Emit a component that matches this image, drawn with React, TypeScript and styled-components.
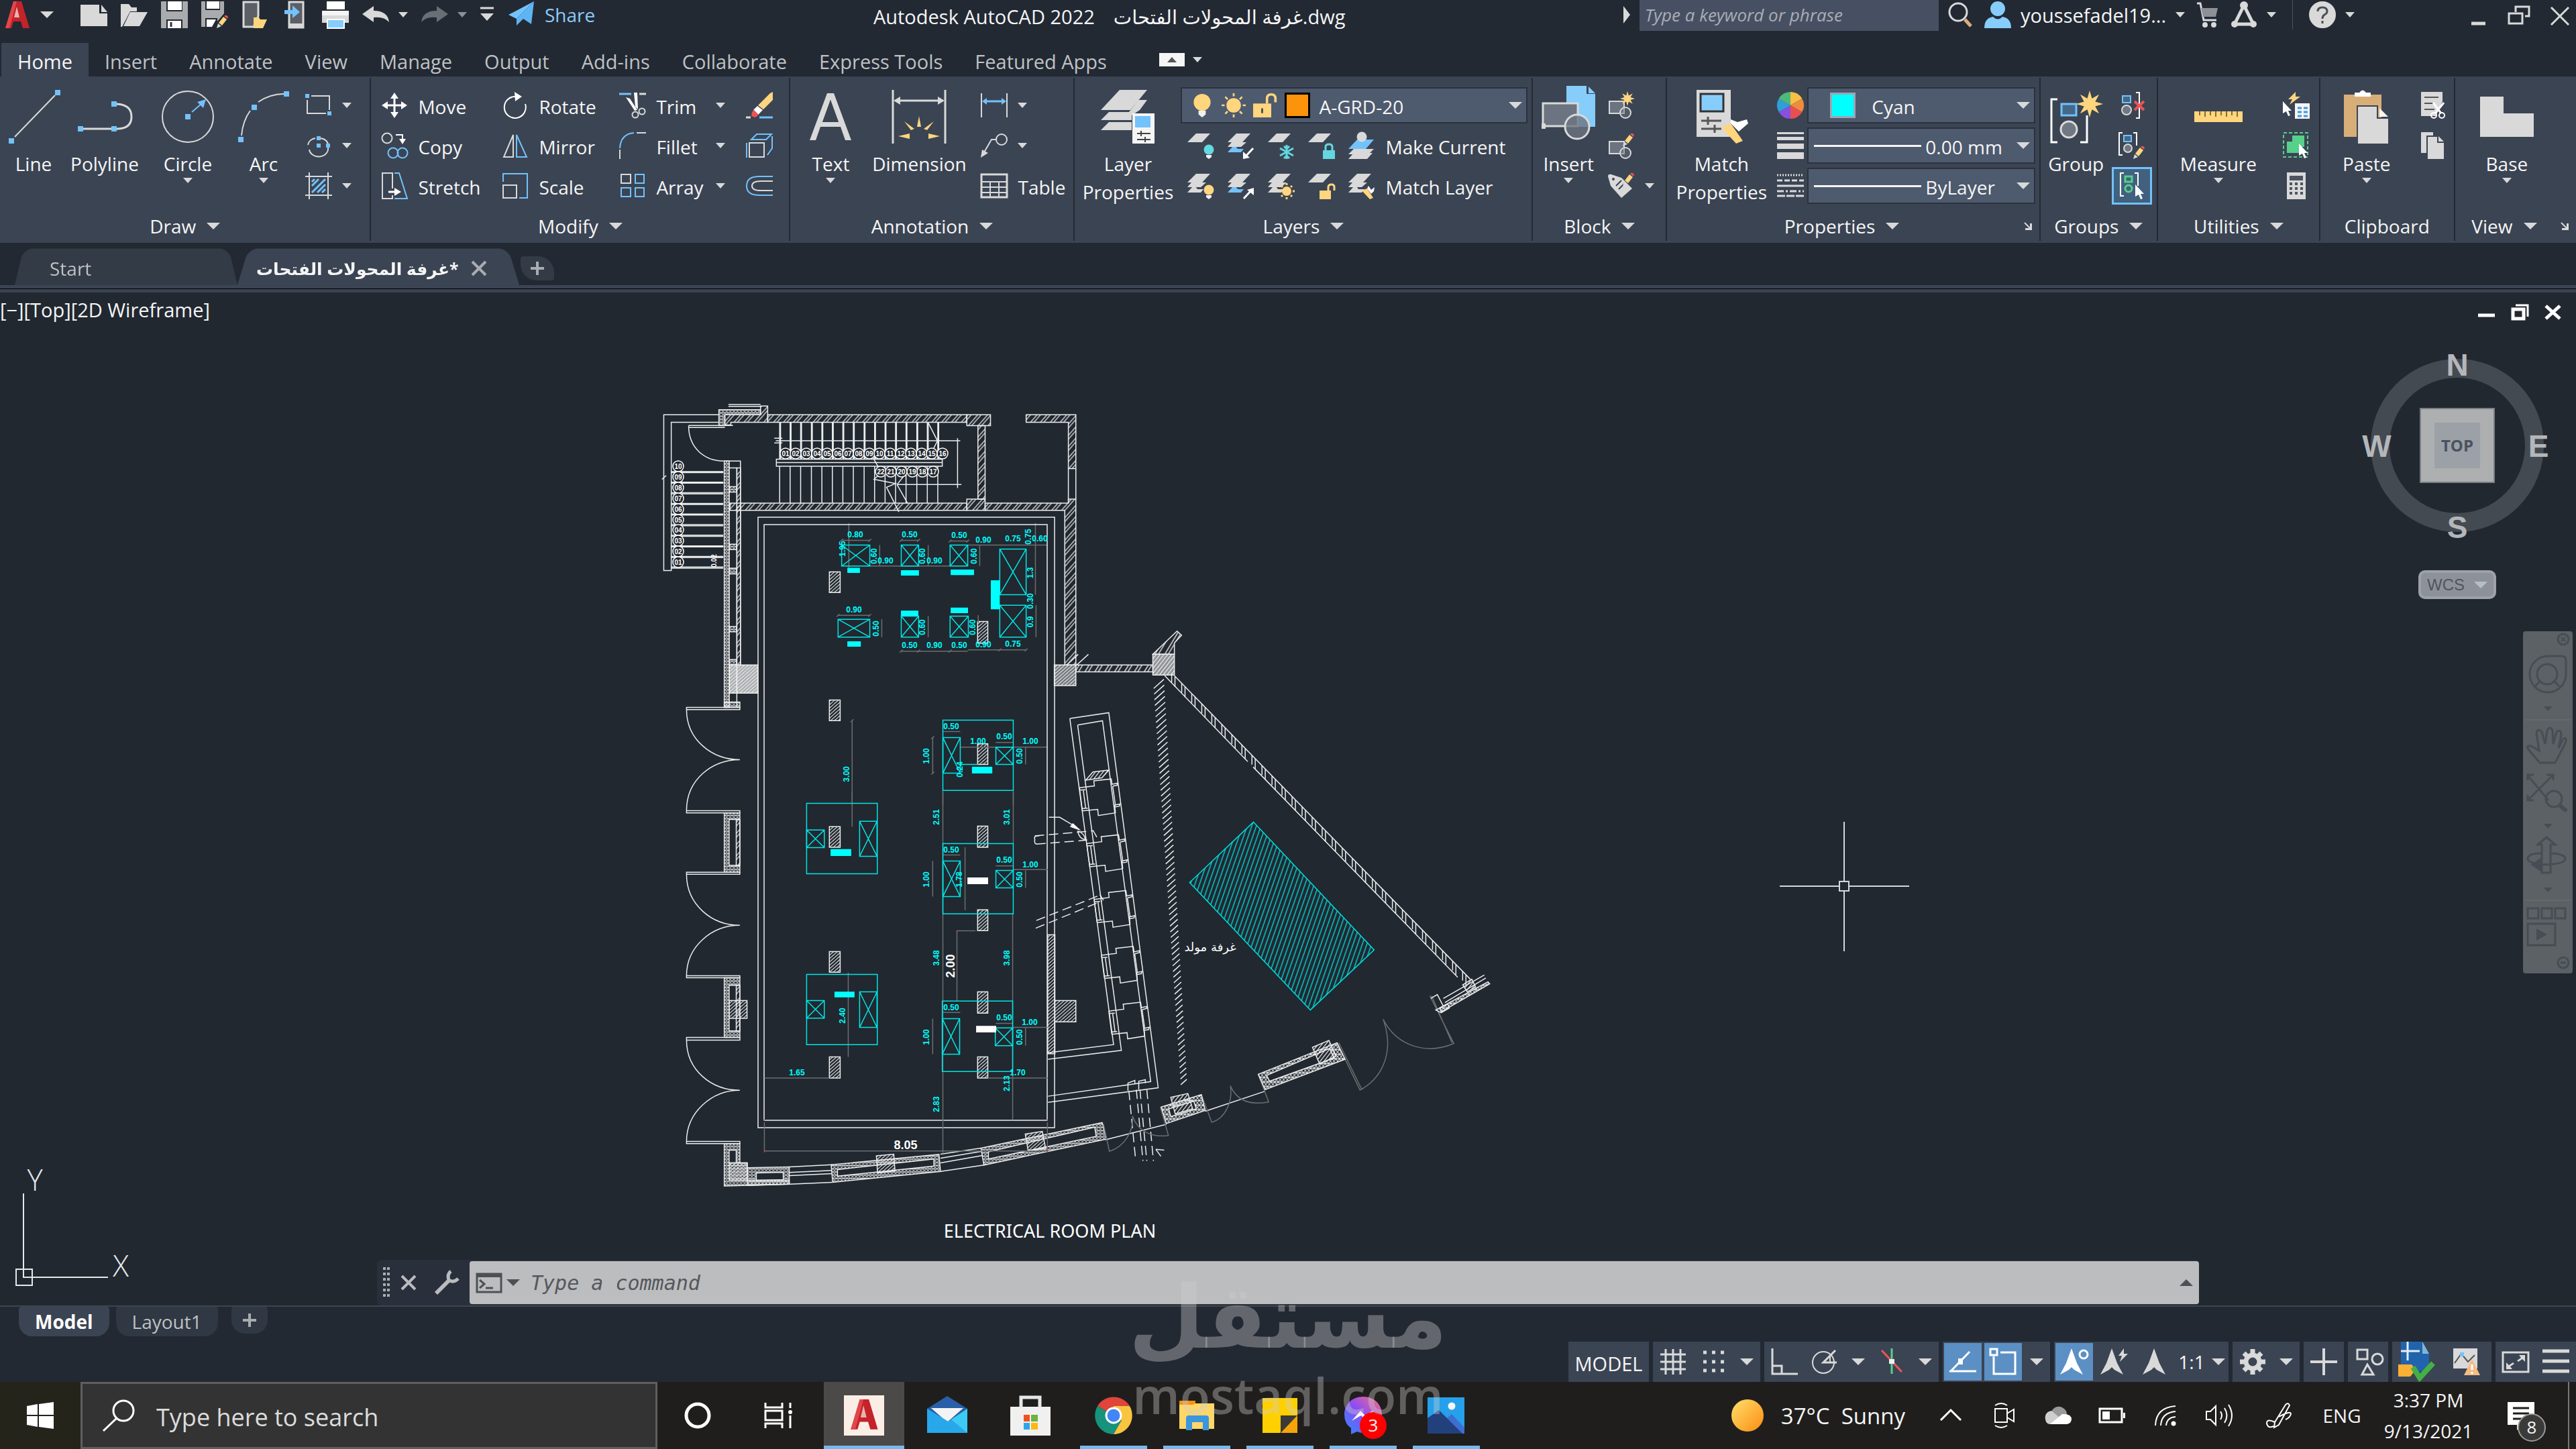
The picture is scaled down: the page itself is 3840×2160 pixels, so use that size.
import React from "react";
import styled, { createGlobalStyle, css } from "styled-components";

/* ---------- palette ---------- */
const c = {
  bg: "#222933",
  canvas: "#212830",
  panel: "#3b4453",
  field: "#4e5a6e",
  line: "#222933",
  text: "#f5f5f5",
  muted: "#bfc1c4",
  grey: "#d9d9d9",
  blue: "#73c2fb",
  yellow: "#ffd57e",
  red: "#ea5455",
  teal: "#63d8e0",
  green: "#56d08b",
  cyan: "#00ffff",
};

const Global = createGlobalStyle`
  * { box-sizing: border-box; }
  body { margin: 0; background: ${c.bg}; }
  body, button, input, select {
    font-family: "Open Sans", "Noto Sans", "DejaVu Sans", sans-serif;
    font-size: 28px;
    color: ${c.text};
  }
  button { background: none; border: 0; padding: 0; margin: 0; cursor: pointer; }
  svg { display: block; flex: none; }
`;

const Page = styled.div`
  position: relative;
  display: flex;
  flex-direction: column;
  min-height: 100vh;
  overflow: hidden;
  white-space: nowrap;
`;

/* ---------- small drawing helpers ---------- */
const IconSvg = styled.svg<{ $s: number }>`
  width: ${(p) => p.$s}px;
  height: ${(p) => p.$s}px;
  overflow: visible;
`;
type Kids = { children?: React.ReactNode };
const Ico = ({ s = 40, v, children }: Kids & { s?: number; v?: number }) => (
  <IconSvg $s={s} viewBox={`0 0 ${v ?? s} ${v ?? s}`} fill="none" stroke={c.grey} strokeWidth={2} aria-hidden>
    {children}
  </IconSvg>
);
const F = ({ d, f = c.grey }: { d: string; f?: string }) => <path d={d} fill={f} stroke="none" />;
const L = ({ d, s = c.grey, w = 2 }: { d: string; s?: string; w?: number }) => (
  <path d={d} fill="none" stroke={s} strokeWidth={w} />
);

const CaretSvg = styled.svg<{ $big?: boolean }>`
  width: ${(p) => (p.$big ? 20 : 14)}px;
  height: ${(p) => (p.$big ? 10 : 8)}px;
`;
const Caret = ({ big, up, color = c.grey }: { big?: boolean; up?: boolean; color?: string }) => (
  <CaretSvg $big={big} viewBox="0 0 20 10" preserveAspectRatio="none" aria-hidden>
    <path d={up ? "M0 10H20L10 0Z" : "M0 0H20L10 10Z"} fill={color} />
  </CaretSvg>
);

/* ---------- title bar ---------- */
const TitleBar = styled.header`
  display: flex;
  justify-content: space-between;
  height: 64px;
`;
const TitleGroup = styled.div`
  display: flex;
  align-items: center;
  height: 44px;
`;
const QuickAccess = styled(TitleGroup)`
  padding-left: 6px;
  gap: 20px;
`;
const ToolButton = styled.button`
  display: flex;
  align-items: center;
  gap: 14px;
`;
const UserButton = styled(ToolButton)`
  font-size: 29px;
`;
const ShareButton = styled(ToolButton)`
  color: #8ccbf9;
  margin-left: 2px;
`;
const AppTitle = styled.h1`
  margin: 0;
  padding-top: 7px;
  font-size: 29px;
  font-weight: 400;
  display: flex;
  gap: 28px;
  line-height: 36px;
`;
const Keyword = styled.input`
  width: 446px;
  height: 48px;
  border: 0;
  padding: 0 8px;
  background: #475063;
  font-style: italic;
  font-size: 26px;
  &::placeholder { color: #a9adb5; opacity: 1; }
`;
const Account = styled(TitleGroup)`
  gap: 14px;
  padding-right: 8px;
`;
const Divider = styled.span`
  width: 1px;
  height: 44px;
  background: #4a5263;
  margin: 0 10px;
`;
const WindowButtons = styled(TitleGroup)`
  gap: 26px;
  margin-left: 152px;
`;

const BlankSheet = () => <F d="M0 5H28V18H40V37H0Z M31 5L40 16H31Z" />;

/* ---------- ribbon tabs ---------- */
const Tabs = styled.nav`
  display: flex;
  height: 50px;
  padding-left: 2px;
  align-items: stretch;
`;
const Tab = styled.button<{ $on?: boolean }>`
  padding: 4px 24px 0;
  font-size: 29px;
  color: ${(p) => (p.$on ? c.text : c.muted)};
  background: ${(p) => (p.$on ? c.panel : "none")};
`;
const RibbonToggle = styled.button`
  display: flex;
  align-items: center;
  gap: 12px;
  margin-left: 54px;
`;
const ToggleBox = styled.span`
  display: grid;
  place-items: center;
  width: 38px;
  height: 20px;
  background: #f5f5f5;
`;

/* ---------- ribbon ---------- */
const Ribbon = styled.div`
  display: flex;
  height: 248px;
  background: ${c.panel};
`;
const PanelBox = styled.section<{ $grow: number }>`
  flex: ${(p) => p.$grow} 1 0;
  min-width: 0;
  display: flex;
  flex-direction: column;
  margin: 2px 0 3px;
  border-right: 2px solid ${c.line};
  &:last-child { border-right: 0; }
`;
const PanelBody = styled.div<{ $pad?: number }>`
  flex: 1;
  display: flex;
  padding-left: ${(p) => p.$pad ?? 0}px;
`;
const PanelTitle = styled.div`
  display: flex;
  height: 44px;
`;
const TitleButton = styled.button`
  flex: 1;
  display: flex;
  align-items: center;
  justify-content: center;
  gap: 16px;
`;
const Launcher = styled.button`
  width: 34px;
  display: grid;
  place-items: center;
`;
const Stack = styled.div<{ $gap?: number; $fill?: boolean }>`
  display: flex;
  flex-direction: column;
  padding-top: 11px;
  margin-left: ${(p) => p.$gap ?? 0}px;
  ${(p) => p.$fill && css`flex: 1; min-width: 0; padding-right: 6px;`}
`;
const Row = styled.div<{ $gap?: number; $pad?: number }>`
  display: flex;
  align-items: center;
  height: 60px;
  gap: ${(p) => p.$gap ?? 0}px;
  padding-left: ${(p) => p.$pad ?? 0}px;
`;
const SmallButton = styled.button<{ $w?: number }>`
  display: flex;
  align-items: center;
  height: 60px;
  gap: 15px;
  ${(p) => p.$w && css`width: ${p.$w}px;`}
`;
const RowLabel = styled.span`
  padding-top: 4px;
`;
const EndCaret = styled.span`
  margin-left: auto;
`;
const BigBox = styled.button<{ $w: number }>`
  display: flex;
  flex-direction: column;
  align-items: center;
  width: ${(p) => p.$w}px;
  padding-top: 18px;
  line-height: 42px;
`;
const BigLabel = styled.span`
  margin-top: 9px;
  white-space: pre-line;
`;
const Big = ({ w, label, caret, children }: Kids & { w: number; label: string; caret?: boolean }) => (
  <BigBox $w={w}>
    <Ico s={80}>{children}</Ico>
    <BigLabel>{label}</BigLabel>
    {caret && <Caret />}
  </BigBox>
);
const Small = ({ label, caret, w, icon, name }: { label?: string; caret?: boolean; w?: number; icon: React.ReactNode; name?: string }) => (
  <SmallButton $w={w} aria-label={label ?? name}>
    <Ico>{icon}</Ico>
    {label && <RowLabel>{label}</RowLabel>}
    {caret && (w ? <EndCaret><Caret /></EndCaret> : <Caret />)}
  </SmallButton>
);
const Panel = ({ title, grow, pad, caret = true, launcher, children }: Kids & { title: string; grow: number; pad?: number; caret?: boolean; launcher?: boolean }) => (
  <PanelBox $grow={grow}>
    <PanelBody $pad={pad}>{children}</PanelBody>
    <PanelTitle>
      <TitleButton>{title}{caret && <Caret big />}</TitleButton>
      {launcher && (
        <Launcher aria-label={`${title} settings`}>
          <Ico s={12}><L d="M1 1L9 9" /><F d="M12 2V12H2V9H9V2Z" /></Ico>
        </Launcher>
      )}
    </PanelTitle>
  </PanelBox>
);

const Combo = styled.label<{ $pad?: number }>`
  flex: 1;
  display: flex;
  align-items: center;
  height: 54px;
  padding: 0 6px 0 ${(p) => p.$pad ?? 10}px;
  background: ${c.field};
  border: 2px solid #2b323e;
`;
const Select = styled.select`
  appearance: none;
  flex: 1;
  min-width: 0;
  border: 0;
  padding: 4px 0 0;
  background: none;
  color: ${c.text};
  outline: none;
`;
const ComboIcons = styled.span<{ $after?: number }>`
  display: flex;
  align-items: center;
  gap: 11px;
  margin-right: ${(p) => p.$after ?? 13}px;
`;
const Swatch = styled.span<{ $fill: string; $edge: string }>`
  width: 38px;
  height: 38px;
  background: ${(p) => p.$fill};
  border: 3px solid ${(p) => p.$edge};
`;
const Stroke = styled.span`
  width: 160px;
  height: 3px;
  margin-right: 6px;
  background: ${c.text};
`;
const ActiveTool = styled.button`
  display: grid;
  place-items: center;
  width: 60px;
  height: 56px;
  margin: 2px 0;
  background: #41617f;
  border: 3px solid ${c.blue};
`;
const CenterCell = styled.div`
  width: 60px;
  display: grid;
  justify-items: center;
`;

/* square handles on drawing icons */
const Dots = ({ at, s = 8 }: { at: number[][]; s?: number }) => (
  <>{at.map(([x, y]) => <rect key={`${x}-${y}`} x={x - s / 2} y={y - s / 2} width={s} height={s} fill={c.blue} stroke="none" />)}</>
);
/* stacked layer sheets */
const Sheets = ({ n = 3, blueAt = -1 }: { n?: number; blueAt?: number }) => (
  <>
    {n > 2 && <F d="M0 30L8 21H12L15 25H24L20 30Z" f={blueAt === 2 ? c.blue : c.grey} />}
    {n > 1 && <F d="M0 22L6 15H28L20 22Z" f={c.grey} />}
    <F d="M0 15L13 2H34L22 15Z" />
  </>
);
const Bulb = ({ f }: { f: string }) => (<><circle cx="32" cy="26" r="7.5" fill={f} stroke="none" /><F d="M28 34H36V37L32 40L28 37Z" f="#f0f0f0" /></>);
const Star = ({ x, y, r }: { x: number; y: number; r: number }) => {
  const pts = Array.from({ length: 16 }, (_, i) => {
    const a = (i * Math.PI) / 8;
    const q = i % 2 ? r * 0.45 : r;
    return `${x + q * Math.sin(a)},${y - q * Math.cos(a)}`;
  }).join(" ");
  return <polygon points={pts} fill={c.yellow} stroke="none" />;
};
const Pencil = ({ x, y }: { x: number; y: number }) => (
  <g transform={`translate(${x} ${y})`}>
    <F d="M0 20L2 13L7 17Z" f={c.grey} /><F d="M3 12L10 3L15 7L8 16Z" f={c.yellow} /><F d="M11 2Q14-1 17 3L16 6Z" f={c.red} />
  </g>
);
const Cursor = ({ x, y }: { x: number; y: number }) => (
  <g transform={`translate(${x} ${y})`}><F d="M0 0L13 14H8L11 21L8 22L5 15L0 18Z" f="#fff" /></g>
);
const BlockBase = () => (<><path d="M2 14H24V32H2Z" fill="#6b7480" /><circle cx="26" cy="31" r="8" fill="#6b748080" /></>);

const RibbonPanels = () => (
  <Ribbon>
    <Panel title="Draw" grow={554}>
      <Big w={100} label="Line"><L d="M12 70L72 8" /><Dots at={[[7, 76], [76, 4]]} /></Big>
      <Big w={112} label="Polyline"><L d="M8 58H52M58 21Q80 22 80 40Q80 58 58 58" w={3} /><Dots at={[[4, 58], [54, 58], [54, 21]]} /></Big>
      <Big w={136} label="Circle" caret><circle cx="40" cy="40" r="38" /><Dots at={[[40, 40]]} /><L d="M46 33L60 21" s={c.blue} /><F d="M67 14L63 27L54 18Z" f={c.blue} /></Big>
      <Big w={90} label="Arc" caret><L d="M7 68Q9 46 20 31M32 18Q50 6 70 6" /><Dots at={[[6, 74], [26, 26], [74, 6]]} /></Big>
      <Stack $gap={17}>
        <Small name="Rectangle" caret icon={<><L d="M3 12V32H31M9 6H36V27" /><Dots at={[[3, 6], [36, 32]]} s={6} /></>} />
        <Small name="Ellipse" caret icon={<><L d="M22 9A14 12 0 0 1 34 17M34 23A14 12 0 0 1 6 26M4 19A14 12 0 0 1 15 9" /><Dots at={[[20, 9], [34, 20], [20, 20]]} s={6} /></>} />
        <Small name="Hatch" caret icon={<><L d="M6 0V40M34 0V40M0 6H40M0 34H40" /><L d="M10 20L20 10M10 30L30 10M18 30L30 18M25 30L30 25M10 14L14 10" s={c.blue} w={3} /></>} />
      </Stack>
    </Panel>

    <Panel title="Modify" grow={626} pad={15}>
      <Stack>
        <Small w={180} label="Move" icon={<><L d="M20 6V34M6 20H34" w={3} s="#fff" /><F f="#fff" d="M20 1L26 10H14Z M20 39L26 30H14Z M1 20L10 14V26Z M39 20L30 14V26Z" /></>} />
        <Small w={180} label="Copy" icon={<><circle cx="9" cy="9" r="7.5" /><circle cx="18" cy="31" r="7.5" stroke={c.blue} /><circle cx="32" cy="31" r="7.5" stroke={c.blue} /><L d="M22 4H32V12" s="#fff" /><F d="M32 18L37 10H27Z" f="#fff" /></>} />
        <Small w={180} label="Stretch" icon={<><L d="M17 24V1H2V39H17V34" /><L d="M20 1H27L39 39H20" s={c.blue} /><L d="M11 29H22" s="#fff" w={3} /><F d="M30 29L20 23V35Z" f="#fff" /></>} />
      </Stack>
      <Stack>
        <Small w={175} label="Rotate" icon={<><L d="M21 7A16 16 0 1 0 35 18" s="#fff" /><F d="M19 0L30 7L20 14Z" f="#fff" /></>} />
        <Small w={175} label="Mirror" icon={<><L d="M17 4V37H3Z" /><path d="M22 4V37H37Z" stroke={c.blue} /></>} />
        <Small w={175} label="Scale" icon={<><L d="M2 19H22V38H2Z" /><L d="M2 14V2H38V38H26" s={c.blue} /></>} />
      </Stack>
      <Stack>
        <Small w={158} label="Trim" caret icon={<><L d="M0 3H18" s={c.blue} w={3} /><L d="M30 3H40" w={3} /><F f="#fff" d="M10 8L16 10L27 27L23 28Z M22 1L27 1L28 26L24 22Z" /><circle cx="24" cy="34" r="4.5" /><circle cx="34" cy="29" r="4.5" /></>} />
        <Small w={158} label="Fillet" caret icon={<><L d="M1 24Q2 3 22 1" s={c.blue} /><L d="M1 26V40M26 1H40" /></>} />
        <Small w={158} label="Array" caret icon={<><L d="M3 3H17V16H3Z" /><L d="M24 3H37V16H24ZM3 23H17V36H3ZM24 23H37V36H24Z" s={c.blue} /></>} />
      </Stack>
      <Stack $gap={31}>
        <Small name="Erase" icon={<><F d="M18 20L36 2L40 0V12L26 26Z" f={c.yellow} /><F d="M11 27L17 21L25 27L18 34Z" f="#fff" /><F d="M9 30L12 27L19 34L14 38L8 36Z" f={c.red} /><L d="M0 38H7" w={3} /><L d="M20 38H40" w={3} s={c.blue} /></>} />
        <Small name="Explode" icon={<><L d="M5 16H27V37H5Z" /><L d="M8 11L16 3H38L30 11ZM32 34L39 24V6M1 16V38" s={c.blue} /></>} />
        <Small name="Offset" icon={<><L d="M40 6H20Q1 6 1 20Q1 34 20 34H40" s={c.blue} /><L d="M40 13H22Q9 13 9 20Q9 27 22 27H40" /></>} />
      </Stack>
    </Panel>

    <Panel title="Annotation" grow={424}>
      <Big w={120} label="Text" caret><F d="M9 75L35 5H45L71 75H62L55 55H25L18 75Z M28 48H52L40 15Z" /><F d="M28 48H52L40 15Z" f={c.panel} /></Big>
      <Big w={144} label="Dimension">
        <L d="M1 0V80M79 0V80" w={3} /><L d="M8 16H72" w={3} /><F d="M2 16L12 10V22Z M78 16L68 10V22Z" />
        <F f={c.yellow} d="M37 55L40 39L43 55Z M28 60L18 47L33 58Z M52 60L62 47L47 58Z M26 65L9 69L26 73Z M54 65L71 69L54 73Z" />
      </Big>
      <Stack $gap={20}>
        <Small name="Linear" caret icon={<><L d="M1 2V38M39 2V38" /><L d="M6 14H34" s={c.blue} w={3} /><F d="M2 14L9 9V19ZM38 14L31 9V19Z" f={c.blue} /></>} />
        <Small name="Leader" caret icon={<><circle cx="31" cy="11" r="8" /><L d="M23 11H16L5 30" /><F d="M0 38L2 26L11 31Z" /></>} />
        <Small label="Table" icon={<><L d="M1 3H39V37H1Z" w={3} /><L d="M1 14H39M1 22H39M1 30H39M14 14V37M27 14V37" /></>} />
      </Stack>
    </Panel>

    <Panel title="Layers" grow={684}>
      <Big w={158} label={"Layer\nProperties"}>
        <F d="M0 30L28 0H69L44 30Z" /><F d="M0 45L12 33H42L56 15H69L58 30L46 38V45Z" /><F d="M0 60L12 48H46V60Z" />
        <F d="M47 35H80V80H47Z" f="#f5f5f5" /><F d="M51 39H74V56H51Z" f={c.blue} /><L d="M54 65H74M54 74H74M60 61V69M66 70V78" s="#444" />
      </Big>
      <Stack $fill>
        <Row>
          <Combo $pad={12}>
            <ComboIcons>
              <Ico s={36} v={40}><circle cx="20" cy="15" r="14" fill={c.yellow} stroke="none" /><F d="M14 29H26V35L20 40L14 35Z" f="#f0f0f0" /></Ico>
              <Ico s={36} v={40}><circle cx="20" cy="20" r="12" fill={c.yellow} stroke="none" /><L w={3} s={c.yellow} d="M20 0V5M20 35V40M0 20H5M35 20H40M6 6L10 10M30 30L34 34M34 6L30 10M10 30L6 34" /></Ico>
              <Ico s={36} v={40}><F d="M0 17H30V40H0Z" f={c.yellow} /><L d="M23 17V9Q23 2 30 2Q37 2 37 9V15" s={c.yellow} w={4} /><L d="M15 25V33" s={c.panel} w={3} /></Ico>
              <Swatch $fill="#fb930b" $edge="#000" />
            </ComboIcons>
            <Select aria-label="Layer"><option>A-GRD-20</option></Select>
            <Caret big />
          </Combo>
        </Row>
        <Row $gap={20} $pad={10}>
          <Small name="Off" icon={<><Sheets n={1} /><Bulb f={c.teal} /></>} />
          <Small name="Isolate" icon={<><Sheets blueAt={2} /><L d="M38 24L26 37" s="#fff" w={3} /><F d="M23 40V29L33 38Z" f="#fff" /></>} />
          <Small name="Freeze" icon={<><Sheets n={1} /><L s={c.teal} w={3} d="M28 19V40M18 24L38 35M38 24L18 35M24 21L28 25L32 21M24 39L28 35L32 39" /></>} />
          <Small name="Lock" icon={<><Sheets n={1} /><F d="M22 27H40V40H22Z" f={c.teal} /><L d="M26 27V22Q26 18 31 18Q36 18 36 22V27" s={c.teal} w={3} /></>} />
          <Small label="Make Current" icon={<><F d="M0 40L8 31H36L28 40Z" /><F d="M0 33L8 25H38L30 33Z" /><F d="M0 25L13 11H38L26 25Z" f={c.blue} /><circle cx="20" cy="7" r="7.5" fill={c.grey} stroke="none" /></>} />
        </Row>
        <Row $gap={20} $pad={10}>
          <Small name="On" icon={<><Sheets /><Bulb f={c.yellow} /></>} />
          <Small name="Unisolate" icon={<><Sheets blueAt={2} /><L d="M24 39L35 27" s="#fff" w={3} /><F d="M39 23V34L29 26Z" f="#fff" /></>} />
          <Small name="Thaw" icon={<><Sheets /><circle cx="28" cy="28" r="7" fill={c.yellow} stroke="none" /><L w={3} s={c.yellow} d="M28 16V19M28 37V40M16 28H19M37 28H40M20 20L22 22M34 34L36 36M36 20L34 22M22 34L20 36" /></>} />
          <Small name="Unlock" icon={<><Sheets n={1} /><F d="M17 27H34V40H17Z" f={c.yellow} /><L d="M30 27V22Q30 18 35 18Q39 18 39 22V27" s={c.yellow} w={3} /></>} />
          <Small label="Match Layer" icon={<><Sheets /><F d="M20 27L28 24L37 38L32 40Z" f={c.yellow} /><F d="M28 24L30 20L34 26L39 22L38 28L34 32Z" f="#fff" /></>} />
        </Row>
      </Stack>
    </Panel>

    <Panel title="Block" grow={199}>
      <Big w={106} label="Insert" caret>
        <F d="M37-6H67V6H80V55H37Z M70-5L80 5H70Z" f="#86cdfc" />
        <path d="M2 20H54V54H2Z" fill="#6b7480" strokeWidth={3} /><circle cx="53" cy="55" r="18" fill="#6b7480cc" strokeWidth={3} /><F d="M0 50H6V58H0Z" />
      </Big>
      <Stack $gap={6}>
        <Small name="Create block" icon={<><BlockBase /><Star x={29} y={10} r={11} /></>} />
        <Small name="Edit block" icon={<><BlockBase /><Pencil x={22} y={1} /></>} />
        <Small name="Edit attributes" caret icon={<><F d="M0 6Q0 2 5 3L20 8L36 24L20 38L4 20Z" /><circle cx="8" cy="10" r="2" fill={c.panel} stroke="none" /><L d="M12 20L20 12M16 25L25 16" s={c.panel} /><Pencil x={22} y={0} /></>} />
      </Stack>
    </Panel>

    <Panel title="Properties" grow={557} launcher>
      <Big w={162} label={"Match\nProperties"}>
        <F d="M3 0H54V70H3Z" /><path d="M9 6H43V32H9Z" fill="#86cdfc" stroke="#333" strokeWidth={3} /><L d="M10 46H40M20 40V52M10 58H40M30 52V64" s="#555" w={3} />
        <F d="M40 56L54 50L72 76L62 80Z" f={c.yellow} /><F d="M54 50V44L64 48L78 44L80 50L66 62Z" f="#fff" />
      </Big>
      <Stack $fill>
        <Row $gap={5} $pad={2}>
          <Ico>
            {["#f5c043", "#f08a3c", "#e8504f", "#8a4fe0", "#2f9fd8", "#4fb97a"].map((f, i) => {
              const a = (i * Math.PI) / 3, b = ((i + 1) * Math.PI) / 3;
              return <F key={f} f={f} d={`M20 20L${20 + 20 * Math.sin(a)} ${20 - 20 * Math.cos(a)}A20 20 0 0 1 ${20 + 20 * Math.sin(b)} ${20 - 20 * Math.cos(b)}Z`} />;
            })}
          </Ico>
          <Combo $pad={32}>
            <ComboIcons $after={24}><Swatch $fill={c.cyan} $edge="#9aa7b5" /></ComboIcons>
            <Select aria-label="Color"><option>Cyan</option></Select>
            <Caret big />
          </Combo>
        </Row>
        <Row $gap={5} $pad={2}>
          <Ico><F d="M0 0H40V3H0ZM0 7H40V12H0ZM0 17H40V25H0ZM0 30H40V40H0Z" /></Ico>
          <Combo $pad={8}><Stroke /><Select aria-label="Lineweight"><option>0.00 mm</option></Select><Caret big /></Combo>
        </Row>
        <Row $gap={5} $pad={2}>
          <Ico><path d="M0 4H40" strokeDasharray="2 2" strokeWidth={3} /><path d="M0 12H40" strokeDasharray="8 3" strokeWidth={3} /><L d="M0 20H40" w={3} /><path d="M0 28H40" strokeDasharray="10 3 3 3" strokeWidth={3} /><path d="M0 35H40" strokeDasharray="12 2" strokeWidth={3} /></Ico>
          <Combo $pad={8}><Stroke /><Select aria-label="Linetype"><option>ByLayer</option></Select><Caret big /></Combo>
        </Row>
      </Stack>
    </Panel>

    <Panel title="Groups" grow={174}>
      <Big w={106} label="Group">
        <L d="M12 14H3V78H12M46 78H56V38" s="#fff" w={3} /><path d="M18 21H40V38H18Z" fill="#44688a" stroke={c.blue} strokeWidth={3} />
        <circle cx="29" cy="59" r="12" fill="#6f7883" strokeWidth={3} /><Star x={60} y={21} r={20} />
      </Big>
      <Stack>
        <CenterCell>
          <Small name="Ungroup" icon={<><L d="M26 1H31V39H26" s="#fff" /><path d="M6 6H18V16H6Z" fill="#44688a" stroke={c.blue} /><circle cx="12" cy="27" r="7" fill="#6f7883" /><L d="M24 14L38 27M38 14L24 27" s={c.red} w={4} /></>} />
          <Small name="Group edit" icon={<><L d="M6 1H1V34H6M22 1H27V20" s="#fff" /><path d="M8 5H19V14H8Z" fill="#44688a" stroke={c.blue} /><circle cx="14" cy="24" r="6" fill="#6f7883" /><Pencil x={22} y={20} /></>} />
          <ActiveTool aria-label="Group selection">
            <Ico><L d="M8 1H3V35H8M24 1H29V20" s="#fff" /><path d="M10 6H20V14H10Z" stroke={c.green} strokeWidth={3} /><circle cx="15" cy="24" r="5" stroke={c.green} strokeWidth={3} /><Cursor x={25} y={18} /></Ico>
          </ActiveTool>
        </CenterCell>
      </Stack>
    </Panel>

    <Panel title="Utilities" grow={241}>
      <Big w={180} label="Measure" caret><F d="M4 32H76V48H4Z" f={c.yellow} /><L d="M12 32V38M20 32V40M28 32V38M36 32V40M44 32V38M52 32V40M60 32V38M68 32V40" s="#8a6d2f" /></Big>
      <Stack $gap={6}>
        <Small name="Quick select" icon={<><F d="M19 0L8 11H14L10 19L26 7H19Z" f={c.yellow} /><Cursor x={0} y={14} /><F d="M18 17H40V40H18Z" f="#f5f5f5" /><L d="M22 24H28M22 30H28M22 36H28M31 24H37M31 30H37M31 36H37" s="#3f97e0" w={3} /></>} />
        <Small name="Select all" icon={<><path d="M1 1H37V37H1Z" stroke={c.green} strokeDasharray="5 3" /><F d="M14 5H32V22H14Z M6 14H14V22H24V31H6Z" f={c.green} /><Cursor x={24} y={17} /></>} />
        <Small name="Calculator" icon={<><F d="M6 0H34V40H6Z" /><F d="M10 5H30V12H10Z" f="#4d5460" /><path d="M10 17H30M10 24H30M10 31H30" stroke="#4d5460" strokeWidth={4} strokeDasharray="4 4" /></>} />
      </Stack>
    </Panel>

    <Panel title="Clipboard" grow={200} caret={false}>
      <Big w={138} label="Paste" caret><F d="M6 7H62V70H6Z" f="#d8ae78" /><F d="M22 10V4H29Q34-3 39 4H46V10Z" f="#fff" /><path d="M26 24H56V42H73V81H26Z" fill={c.grey} stroke={c.panel} /><F d="M59 27L72 40H59Z" f="#f5f5f5" /></Big>
      <Stack $gap={6}>
        <Small name="Cut" icon={<><F d="M6 0H38V14L28 36H6Z" /><L d="M11 8H32M11 17H26M11 26H26" s="#555" w={2} /><L d="M24 16L36 32M40 16L27 32" s="#fff" w={3} /><circle cx="25" cy="35" r="4" stroke="#fff" /><circle cx="37" cy="35" r="4" stroke="#fff" /></>} />
        <Small name="Copy clip" icon={<><F d="M6 0H24V5H14V31H6Z" /><F d="M16 7H30V16H40V40H16Z" /><F d="M32 6L40 14H32Z" /></>} />
      </Stack>
    </Panel>

    <Panel title="View" grow={181} launcher>
      <Big w={154} label="Base" caret><F d="M0 10H35V35H80V70H0Z" /></Big>
    </Panel>
  </Ribbon>
);

/* ---------- document tabs ---------- */
const DocTabs = styled.nav`
  display: flex;
  align-items: flex-end;
  height: 63px;
  padding-left: 22px;
`;
const DocTab = styled.div<{ $on?: boolean }>`
  position: relative;
  display: flex;
  align-items: center;
  gap: 18px;
  height: 55px;
  width: ${(p) => (p.$on ? 420 : 332)}px;
  padding: 4px 0 0 ${(p) => (p.$on ? 28 : 52)}px;
  color: ${(p) => (p.$on ? c.text : c.muted)};
  font-weight: ${(p) => (p.$on ? 700 : 400)};
  font-size: ${(p) => (p.$on ? 25 : 28)}px;
  &::before {
    content: "";
    position: absolute;
    inset: 0;
    z-index: 0;
    background: ${(p) => (p.$on ? c.panel : "#323b46")};
    border-radius: 16px 16px 0 0;
    transform-origin: bottom;
    transform: perspective(200px) rotateX(16deg) scaleY(1.12);
  }
  > * { position: relative; }
`;
const NewDoc = styled.button`
  display: grid;
  place-items: center;
  width: 50px;
  height: 36px;
  margin: 0 0 7px 2px;
  background: #323b46;
  border-radius: 4px 24px 4px 24px;
`;
const Groove = styled.div`
  height: 11px;
  background: #000;
  border: solid ${c.panel};
  border-width: 5px 0;
`;

/* ---------- model space ---------- */
const Space = styled.main`
  position: relative;
  flex: 1;
  background: ${c.canvas};
  border-bottom: 2px solid #3d454e;
`;
const Drawing = styled.svg`
  position: absolute;
  inset: 0;
  width: 100%;
  height: 100%;
`;
const ViewLabel = styled.div`
  position: absolute;
  top: 6px;
  left: 0;
  font-size: 29px;
  line-height: 40px;
`;
const MdiButtons = styled.div`
  position: absolute;
  top: 16px;
  right: 20px;
  display: flex;
  gap: 22px;
`;
const Cube = styled.svg`
  position: absolute;
  top: 76px;
  right: 16px;
  width: 320px;
  height: 310px;
`;
const Wcs = styled.button`
  position: absolute;
  top: 414px;
  right: 119px;
  display: flex;
  align-items: center;
  justify-content: center;
  gap: 14px;
  width: 116px;
  height: 43px;
  font: 24px "Liberation Sans", sans-serif;
  color: #50555c;
  background: #8d929a;
  border: 4px solid #9da1a8;
  border-radius: 10px;
`;
const NavBar = styled.div`
  position: absolute;
  top: 505px;
  right: 5px;
  width: 74px;
  height: 510px;
  background: #5c6165;
  border-radius: 4px;
`;
const CommandBar = styled.div`
  position: absolute;
  left: 562px;
  right: 562px;
  bottom: 0;
  height: 68px;
  display: flex;
  align-items: center;
  background: #2a303b;
  border-radius: 6px;
`;
const CommandTools = styled.div`
  display: flex;
  align-items: center;
  gap: 15px;
  width: 138px;
  padding-left: 8px;
`;
const Wrench = styled.button`
  margin-left: 10px;
`;
const CommandField = styled.label`
  flex: 1;
  display: flex;
  align-items: center;
  gap: 6px;
  height: 64px;
  padding: 0 9px;
  background: #bcbdbf;
  border-radius: 4px;
`;
const CommandInput = styled.input`
  flex: 1;
  min-width: 0;
  margin-left: 8px;
  border: 0;
  background: none;
  font: italic 30px "DejaVu Sans Mono", monospace;
  color: #333;
  &::placeholder { color: #55585c; opacity: 1; }
`;

/* the plan is drawn on three sheets, each with its own origin and scale */
type SheetDef = { x: number; y: number; sx: number; sy: number };
const north: SheetDef = { x: 960, y: 580, sx: 700 / 1568, sy: 620 / 1568 };
const south: SheetDef = { x: 960, y: 1180, sx: 700 / 1568, sy: 620 / 1568 };
const east: SheetDef = { x: 1560, y: 900, sx: 700 / 1568, sy: 900 / 1568 };
const Sheet = ({ on, children }: Kids & { on: SheetDef }) => (
  <g transform={`translate(${on.x} ${on.y}) scale(${on.sx} ${on.sy})`}>{children}</g>
);
const P = styled.path`
  fill: none;
  stroke: #eceded;
  stroke-width: 1.5px;
  vector-effect: non-scaling-stroke;
`;
const Eq = styled(P)`stroke: #00e5e5;`;
const Dim = styled(P)`stroke: #6b6e70;`;
const Hatched = styled(P)`fill: url(#hatch);`;
const Wall = styled(P)`fill: url(#wall);`;
const Mesh = styled(P)`fill: url(#mesh); fill-rule: evenodd;`;
const Solid = styled.path<{ $f: string }>`fill: ${(p) => p.$f};`;
const Note = styled.text<{ $f?: string; $s?: number }>`
  font-family: "Liberation Sans Narrow", "Liberation Sans", sans-serif;
  font-weight: 700;
  font-size: ${(p) => p.$s ?? 12}px;
  fill: ${(p) => p.$f ?? c.cyan};
  text-anchor: middle;
`;
const rects = (list: number[][]) => list.map(([x, y, w, h]) => `M${x} ${y}h${w}v${h}h${-w}Z`).join("");
const crossed = (list: number[][]) =>
  list.map(([x, y, w, h]) => `M${x} ${y}h${w}v${h}h${-w}ZL${x + w} ${y + h}M${x + w} ${y}L${x} ${y + h}`).join("");

type Mark = [string, number, number, number?];
const Marks = ({ on, list }: { on: SheetDef; list: Mark[] }) => (
  <>
    {list.map(([t, x, y, turned], i) => {
      const px = Math.round(on.x + x * on.sx), py = Math.round(on.y + y * on.sy);
      return <Note key={i} x={px} y={py + 4} transform={turned ? `rotate(-90 ${px} ${py})` : undefined}>{t}</Note>;
    })}
  </>
);
const Bubbles = ({ on, list }: { on: SheetDef; list: Mark[] }) => (
  <>
    {list.map(([t, x, y], i) => {
      const px = Math.round(on.x + x * on.sx), py = Math.round(on.y + y * on.sy);
      return <g key={i}><circle cx={px} cy={py} r={8} fill={c.canvas} stroke="#fff" strokeWidth={1.5} /><Note $f="#fff" $s={10} x={px} y={py + 4}>{t}</Note></g>;
    })}
  </>
);

const northMarks: Mark[] = [
  ["0.80", 706, 550], ["0.50", 888, 550], ["0.50", 1053, 552], ["0.90", 1134, 568], ["0.75", 1232, 565], ["0.60", 1322, 565], ["0.75", 1284, 556, 1],
  ["1.95", 664, 603, 1], ["0.60", 768, 629, 1], ["0.90", 806, 647], ["0.60", 930, 629, 1], ["0.90", 970, 647], ["0.60", 1101, 629, 1],
  ["1.3", 1290, 692, 1], ["0.30", 1290, 798, 1], ["0.9", 1290, 877, 1], ["0.90", 701, 832], ["0.50", 776, 903, 1], ["0.60", 930, 898, 1], ["0.60", 1098, 898, 1],
  ["0.50", 888, 966], ["0.90", 970, 966], ["0.50", 1053, 966], ["0.90", 1134, 963], ["0.75", 1232, 962],
  ["0.50", 1027, 1272], ["1.00", 1115, 1329], ["0.50", 1203, 1311], ["1.00", 1290, 1329], ["1.00", 944, 1384, 1], ["0.50", 1254, 1384, 1], ["0.24", 1056, 1434, 1], ["3.00", 677, 1452, 1],
];
const southMarks: Mark[] = [
  ["2.51", 977, 97, 1], ["3.01", 1211, 97, 1], ["0.50", 1027, 220], ["0.50", 1203, 258], ["1.00", 1290, 276], ["1.00", 944, 331, 1], ["1.78", 1053, 331, 1], ["0.50", 1254, 331, 1],
  ["3.48", 977, 628, 1], ["3.98", 1211, 628, 1], ["0.50", 1027, 814], ["0.50", 1203, 852], ["1.00", 1288, 870], ["1.00", 944, 926, 1], ["0.50", 1254, 926, 1],
  ["2.40", 664, 844, 1], ["1.65", 511, 1059], ["1.70", 1248, 1059], ["2.13", 1211, 1100, 1], ["2.83", 977, 1179, 1],
];
const two = (n: number) => String(n).padStart(2, "0");
const upFlight: Mark[] = Array.from({ length: 16 }, (_, i) => [two(i + 1), 472 + 35 * i, 244]);
const downFlight: Mark[] = [22, 21, 20, 19, 18, 17].map((n, i) => [two(n), 790 + 35 * i, 311]);
const sideFlight: Mark[] = Array.from({ length: 10 }, (_, i) => [two(10 - i), 114, 292 + 40 * i]);
const treads = Array.from({ length: 16 }, (_, i) => 453 + Math.round(35.2 * i));

const lockers = Array.from({ length: 5 }, (_, i) => (
  <P key={i} transform={`translate(${24.5 * i} ${145 * i})`}
    d="M110 478L160 473L158 460L216 455L219 469L236 466L237 471L221 474M120 538L171 534L173 550L230 543L228 523L245 520L243 526L226 528M110 478L120 538M123 485L131 532M110 484L130 483M118 532L138 531M221 474L230 523" />
));
const rungs = Array.from({ length: 30 }, (_, i) => {
  const x = 418 + 33.5 * i, y = 187 + (x - 427) * 0.7976;
  return `M${x} ${y}v24M${x + 11} ${y + 9}v27`;
}).join("");
const partition = Array.from({ length: 71 }, (_, i) => {
  const y = 220 + 14.7 * i, x = 358 + (y - 220) * 0.088, w = 34 - i * 0.2;
  return `M${x} ${y}l${w} ${-0.7 * w}`;
}).join("");

const FloorPlan = () => (
  <Drawing viewBox="0 436 3840 1510" aria-label="Electrical room plan">
    <defs>
      <pattern id="hatch" width="9" height="9" patternUnits="userSpaceOnUse" patternTransform="rotate(45)"><path d="M0 0V9" stroke="#eee" strokeWidth="5" /></pattern>
      <pattern id="wall" width="26" height="26" patternUnits="userSpaceOnUse" patternTransform="rotate(38)"><path d="M2 0V26M11 0V26" stroke="#e6e6e6" strokeWidth="3" /></pattern>
      <pattern id="mesh" width="12" height="12" patternUnits="userSpaceOnUse"><path d="M0 0L12 12M12 0L0 12M0 6H12" stroke="#e6e6e6" strokeWidth="2" /></pattern>
      <pattern id="gen" width="14" height="14" patternUnits="userSpaceOnUse" patternTransform="rotate(24)"><path d="M7 0V14" stroke="#00d8d8" strokeWidth="3" /></pattern>
    </defs>

    <Sheet on={north}>
      <P d="M249 97H66V684H91V125H249M149 137H297M149 145H270M60 340L74 326" />
      <P d="M149 138C149 225 205 271 265 271" />
      <P d="M265 271H322V1040M310 297V1200M284 271V1200M284 297H310M282 58H389M282 65H389" />
      <Mesh d="M250 78H389V97H270V138H250Z" /><Wall d="M389 64H413V125H290V135H270V97H389Z" />
      <Wall d="M413 97H1078V125H413Z" /><Wall d="M1078 97H1157V138H1078Z" /><Wall d="M1115 138H1139V415H1115Z" />
      <Wall d="M1276 97H1442V300L1417 300V125H1276Z" /><P d="M1417 300V430M1442 300V415" />
      <Wall d="M1078 415H1139V457H1078Z" /><Wall d="M287 430H1078V457H287Z" /><Wall d="M1139 430H1417L1417 415H1442V1040H1405V457H1139Z" />
      <Mesh d="M268 271H284V1200H268Z" /><Wall d="M310 297H322V1040H310Z" />
      <Mesh d={rects([[284, 368, 25, 20], [284, 585, 25, 20], [284, 675, 25, 22], [284, 895, 25, 20], [284, 1020, 25, 20], [268, 1180, 52, 20]])} />
      <P d={treads.map((x) => `M${x} 125V264M${x + 3} 125V264M${x} 291V430`).join("")} />
      <P d="M442 264H996V291H442ZM442 277H996M453 195H1056M1047 185V373M845 360H1060M948 125L980 195L960 240M845 360L880 310M845 360L880 430M435 185H462M440 195H466M435 203H462" />
      <P d="M763 255L793 315L768 340L840 356L810 370L851 463" />
      <P d={Array.from({ length: 10 }, (_, i) => `M91 ${311 + 40 * i}H265M91 ${315 + 40 * i}H265`).join("")} />
      <Solid $f="#ffffffa0" d="M284 1040H380V1146H284Z" /><Hatched d="M284 1040H380V1146H284Z" />
      <Solid $f="#ffffff60" d="M1370 1040H1442V1118H1370Z" /><Hatched d="M1370 1040H1442V1118H1370Z" />
      <P d="M1412 1040L1450 1000M1445 1040L1484 1000M142 1200H320V1208H142ZM142 1208C142 1320 225 1397 320 1397C225 1397 142 1474 142 1589" />
      <Hatched d={rects([[619, 689, 36, 78], [619, 1172, 36, 78], [1114, 876, 34, 82], [1114, 1337, 34, 78]])} />
      <Dim d="M660 570H754M859 570H917M1022 573H1081M1081 588H1348M684 505V690M787 588V667M949 588V667M1121 588V667M754 667H1022M1307 505V775M1309 815V935M648 853H754M794 868V935M949 856V935M1116 852V880M859 988H1081M1081 983H1276M695 1250V1568M998 1291H1056M964 1314V1448M1175 1332H1233M1056 1350H1348M1274 1350V1415M998 1513V1568M1233 1513V1568" />
      <Dim d="M655 575L665 565M749 575L759 565M854 575L864 565M912 575L922 565M1017 578L1027 568M1076 578L1086 568M854 993L864 983M912 993L922 983M1017 993L1027 983M1183 988L1193 978M1271 988L1281 978M643 858L653 848M749 858L759 848M959 1319L969 1309M959 1453L969 1443M690 1255L700 1245" />
      <Eq d={crossed([[660, 588, 94, 79], [859, 588, 58, 79], [1022, 588, 59, 79], [1188, 603, 88, 172], [1188, 815, 88, 120], [648, 868, 106, 67], [859, 856, 58, 79], [1022, 856, 61, 79], [998, 1314, 58, 134], [1175, 1350, 58, 65]])} />
      <Eq d="M998 1248H1233V1513H998ZM1056 1415H1115" />
      <Solid $f={c.cyan} d={rects([[679, 674, 42, 19], [858, 683, 60, 20], [1024, 680, 78, 21], [1158, 721, 30, 109], [858, 835, 58, 20], [1024, 824, 58, 21], [679, 951, 45, 20], [1095, 1424, 68, 25]])} />
    </Sheet>

    <P d="M1130 771H1572V1681H1130ZM1139 782H1561V1670H1139Z" />

    <Sheet on={south}>
      <P d="M142 72H320V80H142ZM320 304V312H142V304ZM142 312C142 425 225 504 320 504C225 504 142 585 142 694H320V702H142V694M142 927H320V937H142ZM142 937C142 1050 225 1126 320 1126C225 1126 142 1210 142 1319H320V1327H142V1319" />
      <Mesh d="M268 80H320V304H268ZM284 105V278H320V105Z" /><Mesh d="M268 702H320V927H268ZM284 730V902H320V730Z" /><Mesh d="M268 1327H320V1400H345V1465H485V1480L268 1487ZM284 1352V1400H308V1352Z" />
      <Wall d="M308 105H320V278H308ZM308 730H320V902H308Z" />
      <Hatched d={rects([[619, 132, 36, 78], [619, 603, 36, 78], [619, 1000, 36, 80], [1114, 130, 34, 80], [1114, 446, 34, 78], [1114, 755, 34, 80], [1114, 1000, 34, 80], [284, 788, 60, 67], [1372, 788, 70, 80], [284, 1400, 60, 65], [1348, 540, 24, 448]])} />
      <Mesh d="M345 1418L485 1415V1480L345 1485ZM375 1438V1466L465 1463V1435Z" />
      <P d="M485 1415L628 1407M485 1436L628 1428M485 1448L628 1440M485 1480L628 1473M990 1367L1125 1344M990 1382L1128 1356M990 1400L1130 1372M990 1432L1135 1408" />
      <Mesh d="M625 1407L985 1368L990 1432L630 1473ZM646 1425V1450L968 1412V1385Z" />
      <Mesh d="M1125 1344L1530 1248L1545 1310L1135 1408ZM1150 1358V1385L1510 1300L1505 1265Z" />
      <Hatched d="M776 1373L834 1367L838 1430L780 1438ZM1273 1291L1330 1281L1341 1345L1283 1355Z" />
      <Dim d="M695 0V132M998 0V1365M1233 0V196M1231 461V1238M998 239H1056M964 262V396M1072 210V447M1175 280H1233M1233 294H1348M1274 297V363M1045 525V790M1045 525H1107M998 833H1056M964 856V990M1175 874H1231M1231 889H1348M1274 891V958M682 682V1000M402 1080H619M1148 1080H1348M402 1247V1360M1347 1247V1360M402 1355H1347" />
      <Eq d={crossed([[543, 145, 59, 66], [720, 112, 58, 132], [543, 788, 59, 66], [720, 755, 58, 134], [998, 262, 58, 134], [1175, 297, 58, 66], [996, 856, 58, 134], [1173, 891, 58, 67]])} />
      <Eq d={rects([[543, 44, 236, 266], [543, 689, 236, 265], [998, 196, 235, 265], [996, 790, 235, 265]])} />
      <Solid $f={c.cyan} d={rects([[623, 217, 69, 26], [636, 754, 67, 22]])} />
      <Solid $f="#fff" d={rects([[1080, 324, 69, 25], [1109, 883, 67, 25]])} />
      <P d="M1352 97H1388L1430 125M1320 167Q1300 165 1305 180Q1302 198 1312 198" /><Solid $f="#fff" d="M1460 148L1422 133L1432 119Z" />
      <P d="M1305 167L1500 148M1310 198L1480 183M1310 486L1528 388M1308 515L1530 412" strokeDasharray="14 7" />
      <Solid $f="#e03030" d={rects([[400, 1236, 4, 4], [1345, 1236, 4, 4], [400, 1353, 4, 4], [1345, 1353, 4, 4], [1043, 523, 4, 4]])} />
    </Sheet>

    <Sheet on={east}>
      <Wall d="M98 159H355V177H98Z" />
      <Solid $f="#ffffff80" d="M355 131H427V185H355Z" /><Hatched d="M355 131H427V185H355Z" /><Wall d="M355 131L436 71L451 82L427 102V131Z" />
      <P d="M395 187L672 410M690 424L1373 970M427 187L1415 975" /><P d={rungs} /><P d={partition} />
      <P d="M78 298L208 283L373 1257L5 1295M78 298L224 1145L5 1166M104 315L187 304L348 1241L5 1279M104 315L250 1160L5 1183" />
      {lockers}
      <Hatched d="M131 458L155 437L208 432L185 452Z" />
      <P strokeDasharray="14 7" d="M275 1265L298 1447M300 1262L322 1447M312 1262L335 1447M335 1262L357 1447" />
      <P d="M365 1417L393 1419M365 1417L382 1435M104 590Q110 612 130 612Q125 595 104 590M155 588L168 606M272 1265V1245L295 1238V1246M308 1262V1240L330 1236V1245M178 755L190 770" />
      <path d="M691 567L1094 899L881 1055L478 724Z" fill="url(#gen)" stroke="#00d8d8" strokeWidth="3" />
      <P d="M197 1392L400 1352M530 1318L730 1266" />
      <Dim d="M190 1350L210 1422C260 1410 292 1370 287 1330C305 1370 350 1387 407 1381L380 1307M517 1275L552 1347C600 1335 622 1290 614 1252C635 1290 680 1303 742 1294L707 1222M970 1140L1047 1263C1125 1230 1162 1160 1124 1079C1170 1150 1270 1172 1360 1142L1280 1018M976 1140L1052 1260M1286 1018L1354 1140" />
      <Mesh d="M383 1307L517 1275L530 1316L400 1350ZM408 1312L415 1332L500 1312L492 1292Z" />
      <Mesh d="M707 1222L970 1140L997 1183L730 1262ZM735 1225L745 1240L960 1180L945 1155Z" />
      <Mesh d="M1318 1060L1480 987L1474 982L1312 1050Z" />
      <Hatched d="M415 1282L472 1272L488 1312L430 1325ZM888 1152L943 1134L967 1175L912 1195ZM1390 990L1420 975L1433 995L1405 1008Z" />
      <P d="M1283 1025L1305 1015L1325 1045M1325 1025L1462 964M1330 1036L1467 972M1300 1055L1340 1040L1345 1050L1318 1062Z" />
    </Sheet>

    <Marks on={north} list={northMarks} />
    <Marks on={south} list={southMarks} />
    <Bubbles on={north} list={[...upFlight, ...downFlight, ...sideFlight]} />
    <Note $f="#fff" $s={10} x={1064} y={840} transform="rotate(-90 1064 836)">0.02</Note>
    <Note $f="#fff" $s={18} x={1350} y={1713}>8.05</Note>
    <Note $f="#fff" $s={18} x={1417} y={1446} transform="rotate(-90 1417 1440)">2.00</Note>
    <PlanArabic x={1804} y={1418}>غرفة مولد</PlanArabic>
    <PlanTitle x={1565} y={1845}>ELECTRICAL ROOM PLAN</PlanTitle>

    {/* crosshair */}
    <path d="M2653 1321H2742M2756 1321H2846M2749 1225V1314M2749 1328V1418M2742 1314H2756V1328H2742Z" fill="none" stroke="#d5d8da" strokeWidth="2" />
    {/* coordinate system mark */}
    <path d="M35 1779V1904H161M24 1892H48V1916H24Z" fill="none" stroke="#e6e8ea" strokeWidth="2" />
    <Axis x={52} y={1775}>Y</Axis><Axis x={180} y={1903}>X</Axis>
  </Drawing>
);
const PlanArabic = styled.text`
  font: 18px "DejaVu Sans", sans-serif;
  fill: #fff;
  text-anchor: middle;
`;
const PlanTitle = styled.text`
  font: 27px "Noto Sans", "Open Sans", sans-serif;
  fill: #fff;
  text-anchor: middle;
`;
const Axis = styled.text`
  font: 300 44px "Open Sans", sans-serif;
  fill: #e6e8ea;
  text-anchor: middle;
`;
const Compass = styled.text`
  font: 700 46px "Liberation Sans", sans-serif;
  fill: #b4b6b9;
  text-anchor: middle;
`;
const CubeFace = styled(Compass)`
  font: 700 24px "Open Sans", sans-serif;
  fill: #4a5260;
`;

const ModelSpace = () => (
  <Space>
    <FloorPlan />
    <ViewLabel>[−][Top][2D Wireframe]</ViewLabel>
    <MdiButtons>
      <button aria-label="Minimize drawing"><Ico s={28}><L d="M2 18H27" s="#fff" w={5} /></Ico></button>
      <button aria-label="Restore drawing"><Ico s={28}><L d="M8 3H26V20" s="#fff" w={3} /><L d="M4 9H20V23H4Z" s="#fff" w={5} /></Ico></button>
      <button aria-label="Close drawing"><Ico s={28}><L d="M3 4L24 23M24 4L3 23" s="#fff" w={5} /></Ico></button>
    </MdiButtons>
    <Cube viewBox="0 0 320 310">
      <circle cx="159" cy="152" r="115" fill="none" stroke="#434a52" strokeWidth="28" />
      <rect x="104" y="97" width="110" height="110" fill="#adafb1" stroke="#7b8085" strokeWidth="2" />
      <rect x="125" y="118" width="68" height="68" fill="#9ca1a7" />
      <CubeFace x="159" y="161">TOP</CubeFace>
      <Compass x="159" y="48">N</Compass><Compass x="159" y="290">S</Compass>
      <Compass x="39" y="169">W</Compass><Compass x="280" y="169">E</Compass>
    </Cube>
    <Wcs>WCS<Caret big color="#b4c0c4" /></Wcs>
    <NavBar>
      <svg width="74" height="510" viewBox="0 0 74 510" fill="none" stroke="#474d55" strokeWidth="3" aria-label="Navigation tools">
        <circle cx="60" cy="12" r="8" /><path d="M57 9L63 15M63 9L57 15" strokeWidth="2" />
        <path d="M37 37H58Q64 37 64 44V66A27 27 0 1 1 37 37Z" /><circle cx="36" cy="64" r="15" /><path d="M25 75L18 82M47 75L54 82" />
        <path d="M31 112H44L37 119ZM31 287H44L37 294ZM31 382H44L37 389Z" fill="#474d55" stroke="none" />
        <path d="M3 132H71M3 401H71" stroke="#6d7276" strokeWidth="1" />
        <path d="M25 196L8 176Q4 170 12 171L24 178L20 152Q22 143 28 150L33 168L36 148Q40 140 44 148L45 168L50 150Q56 145 57 154L53 174L60 160Q66 157 63 167L48 196Z" />
        <path d="M7 215L38 252M44 215L7 252M7 222V214H16M35 214H45V222M7 244V252H16" /><circle cx="46" cy="250" r="12" /><path d="M55 260L65 268" strokeWidth="6" />
        <path d="M28 360V318H22L35 307L48 318H41V360ZM22 347Q6 344 7 338Q10 330 28 331M42 331Q64 332 63 340Q60 348 26 348" /><path d="M14 348L26 340V356Z" fill="#474d55" />
        <path d="M7 413H23V428H7ZM28 413H43V428H28ZM48 413H63V428H48ZM7 436H48V468H7Z" /><path d="M20 443L36 452L20 461Z" fill="#474d55" stroke="none" />
        <circle cx="60" cy="494" r="8" /><path d="M56 494H64" />
      </svg>
    </NavBar>
    <CommandBar>
      <CommandTools>
        <Ico s={12}><path d="M3-17V29M9-17V29" strokeWidth={4} strokeDasharray="4 4" stroke="#a9acb0" /></Ico>
        <button aria-label="Close command line"><Ico s={24}><L d="M2 2L22 22M22 2L2 22" w={4} s="#b9bbbe" /></Ico></button>
        <Wrench aria-label="Customize"><Ico s={40}><L d="M4 36L24 16" w={6} s="#b9bbbe" /><L d="M26 3Q20 8 23 16Q30 21 37 14" w={5} s="#b9bbbe" /></Ico></Wrench>
      </CommandTools>
      <CommandField>
        <Ico s={40}><path d="M2 7H38V34H2Z" stroke="#4e5154" strokeWidth={3} /><F d="M2 6H38V12H2Z" f="#4e5154" /><L d="M6 16L13 22L6 28M15 28H26" s="#4e5154" w={3} /></Ico>
        <Caret big color="#4e5154" />
        <CommandInput aria-label="Command" placeholder="Type a command" />
        <Caret big up color="#4e5154" />
      </CommandField>
    </CommandBar>
  </Space>
);

/* ---------- layout tabs and status bar ---------- */
const Footer = styled.div`
  display: flex;
  justify-content: space-between;
  height: 112px;
`;
const LayoutTabs = styled.nav`
  display: flex;
  height: 44px;
  padding-left: 28px;
  gap: 10px;
`;
const LayoutTab = styled.button<{ $on?: boolean }>`
  padding: 0 24px;
  background: ${(p) => (p.$on ? c.panel : "#2f3843")};
  color: ${(p) => (p.$on ? "#fff" : c.muted)};
  font-weight: ${(p) => (p.$on ? 700 : 400)};
  border-radius: 4px 4px 20px 20px;
`;
const AddLayout = styled(LayoutTab)`
  width: 54px;
  padding: 0 15px;
  margin-left: 10px;
  height: 40px;
`;
const Status = styled.div`
  display: flex;
  align-self: flex-end;
  height: 60px;
  gap: 6px;
`;
const Segment = styled.div`
  display: flex;
  align-items: center;
  background: ${c.panel};
`;
const StatusButton = styled.button<{ $on?: boolean; $w?: number }>`
  display: flex;
  align-items: center;
  justify-content: center;
  width: ${(p) => p.$w ?? 60}px;
  height: 60px;
  background: ${(p) => (p.$on ? "#5c90c4" : "none")};
  ${(p) => p.$on && css`height: 56px; width: 56px; margin: 0 2px;`}
`;
const ModelLabel = styled(StatusButton)`
  width: 120px;
  padding-top: 4px;
  font-size: 29px;
`;
const ScaleLabel = styled(StatusButton)`
  gap: 10px;
`;
const S = ({ n, on, w, children }: Kids & { n: string; on?: boolean; w?: number }) => (
  <StatusButton aria-label={n} $on={on} $w={w}><Ico>{children}</Ico></StatusButton>
);
const SC = ({ n }: { n: string }) => <StatusButton aria-label={n} $w={40}><Caret big /></StatusButton>;
const Spike = ({ x = 0, f = c.grey }: { x?: number; f?: string }) => <F f={f} d={`M${x + 19} 0L${x + 27} 22L${x + 36} 39L${x + 23} 32L${x + 19} 28L${x + 15} 32L${x + 2} 39L${x + 11} 22Z`} />;

const StatusArea = () => (
  <Footer>
    <LayoutTabs>
      <LayoutTab $on>Model</LayoutTab>
      <LayoutTab>Layout1</LayoutTab>
      <AddLayout aria-label="New layout"><Ico s={24}><L d="M12 2V22M2 12H22" w={4} s="#a9acb0" /></Ico></AddLayout>
    </LayoutTabs>
    <Status>
      <Segment><ModelLabel>MODEL</ModelLabel></Segment>
      <Segment>
        <S n="Grid"><L d="M9 1V39M20 1V39M31 1V39M1 9H39M1 20H39M1 31H39" w={3} /></S>
        <S n="Snap"><path d="M5 6H37M5 20H37M5 33H37" strokeWidth={5} strokeDasharray="5 8" /></S>
        <SC n="Snap options" />
      </Segment>
      <Segment>
        <S n="Ortho"><L d="M2 0V38H40M2 26H16V38" w={3} /></S>
        <S n="Polar"><circle cx="18" cy="21" r="16" /><L d="M38 21H18L36 3" w={3} /><L d="M28 10V21" /></S>
        <SC n="Polar options" />
        <S n="Isodraft"><L d="M20 0V38" s={c.green} w={3} /><L d="M5 3L35 35" s={c.red} w={3} /><F d="M16 16H24V23H16Z" f="#eee" /></S>
        <SC n="Isodraft options" />
      </Segment>
      <Segment>
        <S n="Tracking" on><L d="M0 34H40M2 34L30 5" s="#fff" w={3} /><F d="M13 15H20V24H13Z" f="#fff" /></S>
        <S n="Object snap" on><L d="M6 12V38H38V6H16M1 1H11V10H1Z" s="#fff" w={3} /></S>
        <SC n="Snap modes" />
      </Segment>
      <Segment>
        <S n="Annotation visibility" on><Spike f="#fff" x={-3} /><circle cx="34" cy="9" r="6" stroke="#fff" strokeWidth={3} /></S>
        <S n="Auto scale"><Spike x={-3} /><F d="M34 0L26 11H31L28 20L40 8H34Z" /></S>
        <S n="Annotation scale"><Spike /></S>
        <ScaleLabel $w={80}>1:1<Caret big /></ScaleLabel>
      </Segment>
      <Segment>
        <S n="Workspace">
          <circle cx="20" cy="20" r="10" strokeWidth={7} /><path d="M20 1V7M20 33V39M1 20H7M33 20H39M7 7L11 11M29 29L33 33M33 7L29 11M11 29L7 33" strokeWidth={7} />
        </S>
        <SC n="Workspace options" />
      </Segment>
      <Segment><S n="Monitor"><L d="M20 0V40M0 20H40" w={4} /></S></Segment>
      <Segment><S n="Isolate objects"><L d="M4 2H19V16H4ZM19 24L28 39H11Z" w={3} /><circle cx="34" cy="16" r="8" strokeWidth={3} /></S></Segment>
      <Segment>
        <S n="Trusted file" w={74}><F d="M-4-10H28L38 8V34H-4Z" f="#2164ad" /><F d="M28-10L38 8H28Z" f="#7fb6d8" /><L d="M6-10V18M-4 4H24" s="#e3edf5" w={3} /><F d="M-8 24H12L18 32L10 42H-8Z" f="#fbb034" /><L d="M14 28L24 44L44 22" s="#43b045" w={8} /></S>
        <S n="Performance" w={74}><F d="M0 0H36V30H0Z" /><L d="M2 22L12 8L22 20L32 10" s="#555" /><F d="M10 6H16V12H10Z" f={c.blue} /><F d="M28 16L40 40H16Z" f="#f3bc84" /><L d="M28 24V32M28 35V38" s="#fff" w={3} /></S>
      </Segment>
      <Segment>
        <S n="Clean screen"><L d="M1 6H39V35H1Z" w={3} /><F d="M34 10V20L30 16L24 20L22 18L28 14L25 10ZM6 31V21L10 25L16 21L18 23L12 27L15 31Z" /></S>
        <S n="Customization"><L d="M0 4H40M0 19H40M0 34H40" w={5} /></S>
      </Segment>
    </Status>
  </Footer>
);

/* ---------- desktop taskbar ---------- */
const Taskbar = styled.footer`
  display: flex;
  align-items: stretch;
  height: 100px;
  background: #1f1e1c;
`;
const StartButton = styled.button`
  display: grid;
  place-items: center;
  width: 120px;
  background: #24241b;
`;
const SearchBox = styled.label`
  display: flex;
  align-items: center;
  gap: 32px;
  width: 860px;
  padding-left: 30px;
  background: #333333;
  border: 3px solid #5f5f5f;
`;
const SearchInput = styled.input`
  flex: 1;
  min-width: 0;
  border: 0;
  padding: 4px 0 0;
  background: none;
  font-size: 36px;
  &::placeholder { color: #dcdcdc; opacity: 1; }
`;
const TaskButton = styled.button<{ $open?: boolean; $front?: boolean }>`
  position: relative;
  display: grid;
  place-items: center;
  width: 120px;
  margin-right: ${(p) => (p.$open !== undefined ? 4 : 0)}px;
  margin-left: ${(p) => (p.$front ? 8 : 0)}px;
  background: ${(p) => (p.$front ? "#4b4a48" : "none")};
  &::after {
    content: "";
    position: absolute;
    bottom: 0;
    left: ${(p) => (p.$front ? 0 : 10)}px;
    right: ${(p) => (p.$front ? 0 : 10)}px;
    height: ${(p) => (p.$open ? 5 : 0)}px;
    background: #76b9ed;
  }
`;
const Badge = styled.span`
  position: absolute;
  left: 55px;
  top: 45px;
  width: 40px;
  height: 40px;
  line-height: 38px;
  font-size: 26px;
  text-align: center;
  background: #f00;
  border-radius: 50%;
`;
const Tray = styled.div`
  display: flex;
  align-items: center;
  margin-left: auto;
`;
const Weather = styled.button`
  display: flex;
  align-items: center;
  gap: 26px;
  font-size: 33px;
  margin-right: 28px;
`;
const TrayButton = styled.button<{ $w?: number }>`
  display: grid;
  place-items: center;
  width: ${(p) => p.$w ?? 80}px;
  height: 100px;
`;
const Clock = styled.div`
  width: 168px;
  line-height: 46px;
  text-align: center;
`;
const Notices = styled.button`
  position: relative;
  width: 124px;
  height: 100px;
  padding-left: 34px;
  text-align: left;
`;
const NoticeCount = styled.span`
  position: absolute;
  left: 49px;
  top: 47px;
  width: 42px;
  height: 42px;
  line-height: 36px;
  font-size: 26px;
  text-align: center;
  background: #3a3a39;
  border: 2px solid #9a9a9a;
  border-radius: 50%;
`;
const ShowDesktop = styled.button`
  width: 12px;
  height: 100px;
  border-left: 2px solid #777;
`;
const AcadA = () => (<><F d="M2 40L14 0H26L38 40H28L25 30H14L11 40Z" f="#c4232a" /><F d="M15 24H23L19 8Z" f="#e9b3ad" /><F d="M2 40L14 0H19L8 40Z" f="#e0474b" /></>);

const DesktopBar = () => (
  <Taskbar>
    <StartButton aria-label="Start"><Ico s={40}><F f="#fff" d="M0 6L16 3V19H0ZM18 3L40 0V19H18ZM0 21H16V37L0 34ZM18 21H40V40L18 37Z" /></Ico></StartButton>
    <SearchBox>
      <Ico s={48}><circle cx="31" cy="17" r="15" stroke="#fff" strokeWidth={3} /><L d="M21 28L1 47" s="#fff" w={3} /></Ico>
      <SearchInput aria-label="Search" placeholder="Type here to search" />
    </SearchBox>
    <TaskButton aria-label="Cortana"><Ico s={40}><circle cx="20" cy="20" r="17" stroke="#fff" strokeWidth={5} /></Ico></TaskButton>
    <TaskButton aria-label="Task view"><Ico s={40}><L s="#fff" w={3} d="M1 1V8H26V1M1 39V32H26V39M1 13H26V27H1ZM38 1V9M38 20V39" /><circle cx="38" cy="15" r="2" fill="#fff" stroke="#fff" /></Ico></TaskButton>
    <TaskButton aria-label="AutoCAD" $open $front><Ico s={60}><F d="M0 0H60V60H0Z" f="#fbeee6" /><g transform="translate(8 6) scale(1.12)"><AcadA /></g></Ico></TaskButton>
    <TaskButton aria-label="Mail" $open={false}><Ico s={60}><F d="M0 20L30 1L60 20V56H0Z" f="#285fa8" /><F d="M6 19H54L30 40Z" f="#f3f3f3" /><F d="M0 20L60 56H0Z" f="#28a8ea" /><F d="M60 20L30 40L0 20V56H60Z" f="#28a8ea" /><F d="M60 20V56L36 36Z" f="#3ccbf4" /></Ico></TaskButton>
    <TaskButton aria-label="Store" $open={false}><Ico s={60}><F d="M0 17H60V60H0Z" f="#f0f0f0" /><L d="M16 18V3H44V18" s="#e4e6e8" w={5} /><F d="M20 29H29V39H20Z" f="#f25022" /><F d="M31 29H41V39H31Z" f="#6cb33f" /><F d="M20 41H29V51H20Z" f="#2ba7e8" /><F d="M31 41H41V51H31Z" f="#fdb813" /></Ico></TaskButton>
    <TaskButton aria-label="Chrome" $open>
      <Ico s={56}><F d="M28 28L4 14A28 28 0 0 1 52 14Z" f="#e0443a" /><F d="M28 28L4 14A28 28 0 0 0 28 56L40 35Z" f="#16937a" /><F d="M28 28L52 14A28 28 0 0 1 28 56L40 35Z" f="#f9c440" /><F d="M28 14H52L40 35L28 28Z" f="#f9c440" /><circle cx="28" cy="28" r="11" fill="#4285f4" stroke="#fff" strokeWidth={3} /></Ico>
    </TaskButton>
    <TaskButton aria-label="File Explorer" $open><Ico s={52}><F d="M0 4H24V14H0Z" f="#f6920f" /><F d="M0 10H20L24 8H52V46H0Z" f="#ffd768" /><F d="M10 30Q10 26 14 26H40Q44 26 44 30V48H35V36H19V48H10Z" f="#3a96dd" /></Ico></TaskButton>
    <TaskButton aria-label="Sticky Notes" $open><Ico s={52}><F d="M0 0H52V26L26 52H0Z" f="#ffd000" /><F d="M27 26H52L27 52Z" f="#3a3a3a" /><F d="M52 26V52H27Z" f="#f5a50a" /></Ico></TaskButton>
    <TaskButton aria-label="Messenger, 3 new" $open>
      <Ico s={56}>
        <defs><linearGradient id="msg" x1="0" y1="1" x2="1" y2="0"><stop offset="0" stopColor="#2a8dfd" /><stop offset=".5" stopColor="#8b4df5" /><stop offset="1" stopColor="#fb6d7f" /></linearGradient></defs>
        <F d="M28 0C12 0 0 11 0 27Q0 40 10 47V56L19 52Q23 54 28 54C44 54 56 42 56 27C56 11 44 0 28 0Z" f="url(#msg)" /><F d="M11 36L24 21L31 28L44 20L32 35L25 28Z" f="#fff" />
      </Ico>
      <Badge>3</Badge>
    </TaskButton>
    <TaskButton aria-label="Photos" $open><Ico s={56}><F d="M0 1H55V55H0Z" f="#26a0ea" /><circle cx="36" cy="14" r="5.5" fill="#f3f6f9" stroke="none" /><F d="M24 36L36 26L55 46V55H24Z" f="#3d6fd0" /><F d="M0 32L17 20L52 55H0Z" f="#22407c" /></Ico></TaskButton>
    <Tray>
      <Weather>
        <Ico s={48}><defs><linearGradient id="sun" x1="0" y1="0" x2="1" y2="1"><stop offset="0" stopColor="#ffe16b" /><stop offset="1" stopColor="#fb8b12" /></linearGradient></defs><circle cx="24" cy="24" r="24" fill="url(#sun)" stroke="none" /></Ico>
        <span>37°C&nbsp; Sunny</span>
      </Weather>
      <TrayButton aria-label="Hidden icons"><Ico s={32}><L d="M1 23L16 8L31 23" s="#fff" w={3} /></Ico></TrayButton>
      <TrayButton aria-label="Meet now"><Ico s={36}><L s="#fff" w={2} d="M4 8H22V28H4ZM22 15L32 9V27L22 21M4 3Q13-3 22 3M4 33Q13 39 22 33" /></Ico></TrayButton>
      <TrayButton aria-label="OneDrive"><Ico s={40}><F d="M10 14Q16 4 26 8Q34 12 33 20L8 26Z" f="#9a9a9a" /><F d="M1 26Q-1 15 10 13L34 33H8Q2 33 1 26Z" f="#cfcfcf" /><F d="M8 33L26 18Q40 17 40 26Q39 33 32 33Z" f="#fff" /></Ico></TrayButton>
      <TrayButton aria-label="Battery"><Ico s={38}><L d="M1 9H34V29H1Z" s="#fff" w={3} /><F d="M5 13H16V25H5ZM36 15H39V23H36Z" f="#fff" /></Ico></TrayButton>
      <TrayButton aria-label="Network"><Ico s={32}><L s="#fff" w={2} d="M1 31Q2 4 31 2M9 31Q10 12 31 10M17 31Q18 19 31 18" /><circle cx="28" cy="28" r="3.5" fill="#fff" stroke="none" /></Ico></TrayButton>
      <TrayButton aria-label="Volume"><Ico s={40}><L s="#fff" w={2} d="M1 14H7L15 6V34L7 26H1ZM22 14Q26 20 22 26M28 9Q35 20 28 31M34 4Q44 20 34 36" /></Ico></TrayButton>
      <TrayButton aria-label="Pen" $w={98}><Ico s={40}><L s="#fff" w={2} d="M14 30L30 4Q34 0 36 5L20 34L13 38ZM20 22Q38 12 38 18Q36 24 30 26M14 30Q2 24 2 32Q4 40 12 36" /></Ico></TrayButton>
      <TrayButton $w={90}>ENG</TrayButton>
      <Clock>3:37 PM<br />9/13/2021</Clock>
      <Notices aria-label="8 notifications"><Ico s={40}><F d="M0 0H40V34H22L14 42V34H0Z" f="#fff" /><L d="M8 9H32M8 17H32M8 25H24" s="#1f1e1c" w={3} /></Ico><NoticeCount>8</NoticeCount></Notices>
      <ShowDesktop aria-label="Show desktop" />
    </Tray>
  </Taskbar>
);

/* ---------- watermark ---------- */
const Watermark = styled.div`
  position: absolute;
  left: 0;
  right: 0;
  bottom: 40px;
  text-align: center;
  color: rgba(205, 205, 205, 0.38);
  pointer-events: none;
`;
const MarkArabic = styled.div`
  font: 700 130px/152px "DejaVu Sans", sans-serif;
`;
const MarkLatin = styled.div`
  font: 600 74px/80px "Open Sans", sans-serif;
`;

const tabs = ["Home", "Insert", "Annotate", "View", "Manage", "Output", "Add-ins", "Collaborate", "Express Tools", "Featured Apps"];

export default function App() {
  return (
    <Page>
      <Global />
      <TitleBar>
        <QuickAccess>
          <ToolButton aria-label="Application menu"><Ico s={40}><AcadA /></Ico><Caret big /></ToolButton>
          <span />
          <ToolButton aria-label="New"><Ico><BlankSheet /></Ico></ToolButton>
          <ToolButton aria-label="Open"><Ico><F d="M0 4H12L16 9H24V15H14L2 38H0Z" /><F d="M14 16H40L28 37H4Z" /></Ico></ToolButton>
          <ToolButton aria-label="Save"><Ico><F d="M0 0H8V15H32V0H40V40H32V27H8V40H0Z" f="#a9abad" /><F d="M10 0H31V13H10ZM10 29H30V40H10Z" f="#fff" /><L d="M15 31V38" s="#333" w={3} /></Ico></ToolButton>
          <ToolButton aria-label="Save as"><Ico><F d="M0 0H6V13H28V0H34V18L24 30V25H6V38H0Z" f="#a9abad" /><F d="M8 0H27V11H8ZM8 27H22L16 38H8Z" f="#fff" /><Pencil x={23} y={20} /></Ico></ToolButton>
          <ToolButton aria-label="Open from web"><Ico><path d="M3 1H25V22L18 38H3Z" fill="#5c6066" strokeWidth={3} /><F d="M18 24H26L28 27H38L32 40H18Z" f={c.yellow} /></Ico></ToolButton>
          <ToolButton aria-label="Save to web"><Ico><path d="M11 1H32V39H11Z" fill="#5c6066" strokeWidth={3} /><F d="M11 33H32V40H11Z" /><F d="M4 13H16V6L27 16L16 25V19H4Z" f={c.blue} /></Ico></ToolButton>
          <ToolButton aria-label="Print"><Ico><F d="M7 0H34V12H7Z" f="#fff" /><F d="M0 14H40V32H0Z" /><F d="M0 14H40V21H0Z" f="#f5f5f5" /><path d="M8 27H33V40H8Z" fill="#86cdfc" stroke="#fff" /></Ico></ToolButton>
          <ToolButton aria-label="Undo"><Ico><F d="M0 19L17 7V14Q38 14 40 31Q32 22 17 24V31Z" /></Ico><Caret /></ToolButton>
          <ToolButton aria-label="Redo"><Ico><F d="M40 19L23 7V14Q2 14 0 31Q8 22 23 24V31Z" f="#6a6e75" /></Ico><Caret color="#8d9096" /></ToolButton>
          <ToolButton aria-label="Customize toolbar"><Ico s={20}><L d="M0 0H20" w={3} /><F d="M0 8H20L10 19Z" /></Ico></ToolButton>
          <ShareButton><Ico><F d="M0 20L38 0L12 26Z" f={c.blue} /><F d="M38 0L34 34L22 26L12 36V26Z" f="#5fb4f3" /></Ico>Share</ShareButton>
        </QuickAccess>
        <AppTitle><span>Autodesk AutoCAD 2022</span><span dir="ltr">غرفة المحولات الفتحات.dwg</span></AppTitle>
        <Account>
          <Ico s={10}><F d="M0-8L10 5L0 18Z" /></Ico>
          <Keyword aria-label="Search help" placeholder="Type a keyword or phrase" />
          <ToolButton aria-label="Search"><Ico><circle cx="15" cy="16" r="13" strokeWidth={3} /><L d="M25 27L34 37" s="#d8ae78" w={5} /></Ico></ToolButton>
          <UserButton><Ico><circle cx="20" cy="11" r="11" fill="#86cdfc" stroke="none" /><F d="M0 40Q0 25 13 23Q20 30 27 23Q40 25 40 40Z" f="#86cdfc" /></Ico>youssefadel19...<Caret /></UserButton>
          <ToolButton aria-label="Cart"><Ico><L d="M4 3H9L14 28H33" w={3} /><F d="M10 10H35L32 23H13Z" f="#8d9096" /><circle cx="16" cy="35" r="3" fill={c.grey} /><circle cx="29" cy="35" r="3" fill={c.grey} /></Ico></ToolButton>
          <ToolButton aria-label="App store"><Ico><path d="M20 6L6 34H34Z" strokeWidth={5} /><circle cx="20" cy="6" r="5" fill={c.grey} /><circle cx="6" cy="34" r="4" fill={c.grey} /><circle cx="34" cy="34" r="4" fill={c.grey} /></Ico><Caret /></ToolButton>
          <Divider />
          <ToolButton aria-label="Help"><Ico><circle cx="20" cy="20" r="19" fill={c.grey} /><path d="M13 15Q13 9 20 9Q27 9 27 15Q27 18 23 20Q20 22 20 26M20 29V33" stroke="#4a4f57" strokeWidth={3} /></Ico><Caret /></ToolButton>
          <WindowButtons>
            <button aria-label="Minimize"><Ico s={36}><L d="M8 31H29" w={5} /></Ico></button>
            <button aria-label="Restore"><Ico s={36}><L d="M12 14V6H32V20H26M2 16H22V31H2Z" w={3} /></Ico></button>
            <button aria-label="Close"><Ico s={32}><L d="M3 5L29 31M29 5L3 31" w={3} /></Ico></button>
          </WindowButtons>
        </Account>
      </TitleBar>
      <Tabs>
        {tabs.map((t) => <Tab key={t} $on={t === "Home"}>{t}</Tab>)}
        <RibbonToggle aria-label="Minimize ribbon"><ToggleBox><Caret up color="#555" /></ToggleBox><Caret /></RibbonToggle>
      </Tabs>
      <RibbonPanels />
      <DocTabs>
        <DocTab><span>Start</span></DocTab>
        <DocTab $on>
          <span dir="ltr">غرفة المحولات الفتحات*</span>
          <button aria-label="Close tab"><Ico s={24}><L d="M2 2L22 22M22 2L2 22" w={4} s="#a9acb0" /></Ico></button>
        </DocTab>
        <NewDoc aria-label="New drawing"><Ico s={20}><L d="M10 0V20M0 10H20" w={4} s="#a9acb0" /></Ico></NewDoc>
      </DocTabs>
      <Groove />
      <ModelSpace />
      <StatusArea />
      <DesktopBar />
      <Watermark><MarkArabic>مستقل</MarkArabic><MarkLatin>mostaql.com</MarkLatin></Watermark>
    </Page>
  );
}
